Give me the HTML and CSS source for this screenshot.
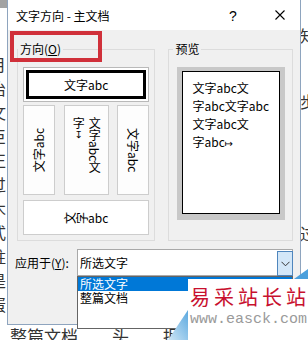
FILE: index.html
```html
<!DOCTYPE html>
<html lang="zh">
<head>
<meta charset="utf-8">
<link rel="stylesheet" href="styles.css">
</head>
<body>
<div class="desk">
  <div class="doc">
    <div class="doc-bar"></div>
    <div class="doc-left">月<br>治<br>文<br>臣<br>正<br>过<br>木<br>式<br>柱<br>是<br>蛋</div>
    <div class="doc-right">知<br><br><br>步<br><br><br><br><br><br>过</div>
    <div class="doc-bottom">整篇文档　　头　　据</div>
  </div>

  <div class="dialog">
    <div class="titlebar">
      <span class="title">文字方向 - 主文档</span>
      <span class="help">?</span>
      <span class="close">
        <svg width="10" height="10" viewBox="0 0 10 10"><path d="M0.5 0.5 L9.5 9.5 M9.5 0.5 L0.5 9.5" stroke="#000" stroke-width="1.1" fill="none"/></svg>
      </span>
    </div>
    <div class="content">
      <div class="groups">
        <fieldset class="group orient">
          <legend>方向(<u>O</u>)</legend>
          <div class="orient-inner">
            <div class="opt h sel"><div class="sel-inner">文字abc</div></div>
            <div class="vrow">
              <div class="opt v narrow"><span class="vt up">文字abc</span></div>
              <div class="opt v wide"><span class="vt mixed">文字abc文字<span class="pm">↧</span></span></div>
              <div class="opt v narrow"><span class="vt down">文字abc</span></div>
            </div>
            <div class="opt h"><span class="rot">文</span><span class="rot">字</span>abc</div>
          </div>
        </fieldset>
        <fieldset class="group preview">
          <legend>预览</legend>
          <div class="preview-inner">
            <div class="frame">
              <div class="page">文字abc文<br>字abc文字abc<br>文字abc文<br>字abc<span class="pm2">↦</span></div>
            </div>
          </div>
        </fieldset>
      </div>
    </div>
    <div class="apply">
      <span class="apply-label">应用于(<u>Y</u>):</span>
      <div class="combo">
        <span class="combo-text">所选文字</span>
        <span class="combo-btn">
          <svg width="9" height="6" viewBox="0 0 9 6"><path d="M0.5 0.8 L4.5 4.8 L8.5 0.8" stroke="#333" stroke-width="1" fill="none"/></svg>
        </span>
      </div>
    </div>
  </div>

  <div class="redbox"></div>

  <div class="list">
    <div class="item active">所选文字</div>
    <div class="item">整篇文档</div>
  </div>

  <div class="wm">
    <svg class="wm-shapes" width="140" height="72" viewBox="0 0 140 72">
      <defs>
        <linearGradient id="g1" x1="0" y1="1" x2="1" y2="0">
          <stop offset="0" stop-color="#cfe6f6"/>
          <stop offset="1" stop-color="#5aa8df"/>
        </linearGradient>
      </defs>
      <polygon points="0,72 20,42 20,72" fill="url(#g1)"/>
      <polygon points="126,11 140,1 140,11" fill="#4a9fdc"/>
    </svg>
    <div class="wm-box">
      <div class="wm-cn">易采站长站</div>
      <div class="wm-url">www.easck.com</div>
    </div>
  </div>
</div>
</body>
</html>
```

FILE: styles.css
```css
html, body {
  margin: 0;
  padding: 0;
}
body {
  width: 308px;
  height: 340px;
  overflow: hidden;
  font-family: "Noto Sans CJK SC", "Noto Sans", sans-serif;
  font-size: 12px;
  color: #000;
}
.desk {
  position: relative;
  width: 308px;
  height: 340px;
  background: #fff;
  overflow: hidden;
}

/* document behind */
.doc {
  position: absolute;
  inset: 0;
  background: #fff;
}
.doc-bar {
  height: 8px;
  width: 8px;
  background: #a3a3a3;
}
.doc-left {
  position: absolute;
  left: -10px;
  top: 52px;
  font-size: 16px;
  line-height: 24px;
  color: #333;
}
.doc-right {
  position: absolute;
  left: 300px;
  top: 24px;
  font-size: 16px;
  line-height: 22px;
  color: #333;
}
.doc-bottom {
  position: absolute;
  left: 10px;
  top: 325px;
  font-size: 17px;
  line-height: 22px;
  color: #333;
  white-space: nowrap;
}

/* dialog window */
.dialog {
  position: absolute;
  left: 7px;
  top: 0;
  width: 294px;
  height: 325px;
  box-sizing: border-box;
  border: 1px solid #8ea4be;
  border-top: none;
  background: #f0f0f0;
  display: flex;
  flex-direction: column;
}
.titlebar {
  height: 30px;
  background: #fff;
  display: flex;
  align-items: center;
  padding-left: 8px;
  flex: none;
}
.title {
  font-size: 12px;
  line-height: 14px;
  padding-top: 2px;
}
.help {
  margin-left: auto;
  width: 16px;
  text-align: center;
  font-family: "Liberation Sans", sans-serif;
  font-size: 14px;
  line-height: 16px;
  padding-top: 2px;
}
.close {
  width: 30px;
  margin-left: 24px;
  margin-right: 5px;
  display: flex;
  justify-content: center;
  align-items: center;
}
.close svg { display: block; }

.content {
  padding: 12px 7px 0 9px;
}
.groups {
  display: flex;
  gap: 13px;
}
.group {
  margin: 0;
  padding: 0;
  min-width: 0;
  border: 1px solid #dcdcdc;
  box-sizing: border-box;
}
.group legend {
  padding: 0 2px;
  margin-left: 0;
  font-size: 12px;
  line-height: 14px;
}
.orient { width: 139px; }
.preview { width: 125px; }
.preview legend { margin-left: 4px; }

.orient-inner {
  padding: 11px 5px 5px 5px;
  display: flex;
  flex-direction: column;
}
.opt {
  box-sizing: border-box;
  background: #fff;
  border: 1px solid #cdcdcd;
}
.opt.h {
  height: 35px;
  display: flex;
  align-items: center;
  justify-content: center;
  line-height: 14px;
}
.opt.sel {
  padding: 2px;
  align-items: stretch;
  justify-content: stretch;
  border-color: #b9b9b9;
}
.sel-inner {
  flex: 1;
  border: 3px solid #000;
  display: flex;
  align-items: center;
  justify-content: center;
}
.vrow {
  margin-top: 3px;
  height: 90px;
  display: flex;
  justify-content: space-between;
}
.vrow + .opt { margin-top: 5px; }
.opt.v {
  height: 90px;
  display: flex;
  justify-content: center;
  align-items: center;
  background: #fdfdfd;
}
.opt.narrow { width: 32px; }
.opt.wide {
  width: 45px;
  align-items: flex-start;
  padding-top: 11px;
}
.vt {
  font-size: 12px;
  line-height: 14px;
}
.vt.up {
  writing-mode: vertical-rl;
  text-orientation: sideways;
  transform: rotate(180deg);
}
.vt.down {
  writing-mode: vertical-rl;
  text-orientation: sideways;
}
.vt.mixed {
  writing-mode: vertical-rl;
  height: 58px;
  line-height: 16px;
}
.pm {
  text-orientation: upright;
  font-family: "DejaVu Sans", sans-serif;
  font-size: 10px;
}
.rot {
  display: inline-block;
  transform: rotate(-90deg);
}

.preview-inner {
  padding: 11px 0 0 8px;
}
.frame {
  width: 108px;
  height: 153px;
  box-sizing: border-box;
  background: #c8c8c8;
  padding: 4px 5px 6px 5px;
}
.page {
  height: 143px;
  box-sizing: border-box;
  border: 1px solid #000;
  background: #fff;
  padding: 7px 0 0 9px;
  font-size: 12px;
  line-height: 18px;
  white-space: nowrap;
}
.pm2 {
  font-family: "DejaVu Sans", sans-serif;
  font-size: 10px;
}

.apply {
  display: flex;
  align-items: center;
  padding: 8px 7px 0 7px;
}
.apply-label {
  width: 62px;
  flex: none;
  font-size: 12px;
  line-height: 14px;
}
.combo {
  flex: 1;
  height: 27px;
  box-sizing: border-box;
  border: 1px solid #a9a9a9;
  background: #fff;
  display: flex;
  align-items: stretch;
  padding: 1px 0 0 0;
}
.combo-text {
  flex: 1;
  padding-left: 2px;
  display: flex;
  align-items: center;
  font-size: 12px;
  line-height: 14px;
}
.combo-btn {
  width: 16px;
  box-sizing: border-box;
  border: 1px solid #4f86bd;
  background: #d3e7f8;
  display: flex;
  align-items: center;
  justify-content: center;
  margin-right: -1px;
  margin-bottom: -1px;
}
.combo-btn svg { display: block; }

/* annotation */
.redbox {
  position: absolute;
  left: 10px;
  top: 31px;
  width: 92px;
  height: 31px;
  box-sizing: border-box;
  border: 4px solid #d0303a;
}

/* dropdown list */
.list {
  position: absolute;
  left: 77px;
  top: 276px;
  width: 216px;
  height: 53px;
  box-sizing: border-box;
  border: 1px solid #646464;
  background: #fff;
}
.item {
  height: 14px;
  line-height: 14px;
  padding-left: 2px;
  font-size: 12px;
}
.item.active {
  background: #0078d7;
  color: #fff;
}

/* watermark */
.wm {
  position: absolute;
  left: 168px;
  top: 268px;
  width: 140px;
  height: 72px;
}
.wm-shapes {
  position: absolute;
  left: 0;
  top: 0;
}
.wm-box {
  position: absolute;
  left: 20px;
  top: 11px;
  width: 120px;
  height: 61px;
  background: #fff;
  padding: 6px 0 0 2px;
  box-sizing: border-box;
  overflow: hidden;
}
.wm-cn {
  font-size: 20px;
  line-height: 24px;
  letter-spacing: 4px;
  color: #c8102e;
  white-space: nowrap;
}
.wm-url {
  margin-top: 3px;
  font-family: "Liberation Mono", monospace;
  font-size: 15px;
  line-height: 16px;
  color: #9a9a9a;
  white-space: nowrap;
}
```
